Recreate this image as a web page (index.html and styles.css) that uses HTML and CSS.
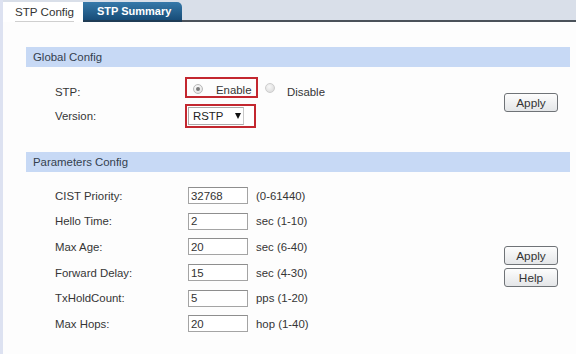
FILE: index.html
```html
<!DOCTYPE html>
<html lang="en">
<head>
    <meta charset="UTF-8">
    <meta name="viewport" content="width=device-width, initial-scale=1.0">
    <title>STP Config</title>
    <link rel="stylesheet" href="styles.css">
</head>
<body>
    <div class="tabs">
        <div class="tab tab-active"><span>STP Config</span></div>
        <div class="tab tab-summary">STP Summary</div>
        <div class="tab-fill"></div>
    </div>
    <div class="content">
        <div class="section">
            <div class="section-title">Global Config</div>
            <div class="section-body">
                <div class="rows">
                    <div class="row row-stp">
                        <span class="label">STP:</span>
                        <div class="mark mark-radio">
                            <span class="radio checked"></span>
                            <span class="opt">Enable</span>
                        </div>
                        <span class="radio radio-off"></span>
                        <span class="opt opt-off">Disable</span>
                    </div>
                    <div class="row row-version">
                        <span class="label">Version:</span>
                        <div class="mark mark-select">
                            <div class="select">RSTP<span class="arrow"></span></div>
                        </div>
                    </div>
                </div>
                <div class="buttons buttons-global">
                    <button type="button">Apply</button>
                </div>
            </div>
        </div>
        <div class="section">
            <div class="section-title">Parameters Config</div>
            <div class="section-body">
                <div class="rows params">
                    <div class="param">
                        <span class="label">CIST Priority:</span>
                        <input type="text" value="32768">
                        <span class="unit">(0-61440)</span>
                    </div>
                    <div class="param">
                        <span class="label">Hello Time:</span>
                        <input type="text" value="2">
                        <span class="unit">sec (1-10)</span>
                    </div>
                    <div class="param">
                        <span class="label">Max Age:</span>
                        <input type="text" value="20">
                        <span class="unit">sec (6-40)</span>
                    </div>
                    <div class="param">
                        <span class="label">Forward Delay:</span>
                        <input type="text" value="15">
                        <span class="unit">sec (4-30)</span>
                    </div>
                    <div class="param">
                        <span class="label">TxHoldCount:</span>
                        <input type="text" value="5">
                        <span class="unit">pps (1-20)</span>
                    </div>
                    <div class="param">
                        <span class="label">Max Hops:</span>
                        <input type="text" value="20">
                        <span class="unit">hop (1-40)</span>
                    </div>
                </div>
                <div class="buttons buttons-params">
                    <button type="button">Apply</button>
                    <button type="button">Help</button>
                </div>
            </div>
        </div>
    </div>
</body>
</html>
```

FILE: styles.css
```css
body {
    margin: 0;
    height: 354px;
    box-sizing: border-box;
    border-left: 3px solid #dde2f1;
    background-color: #fdfdfd;
    font-family: 'Liberation Sans', Arial, sans-serif;
    font-size: 11.4px;
    color: #353535;
    overflow: hidden;
}
.tabs {
    display: flex;
    align-items: flex-end;
    height: 22px;
    padding-top: 2px;
    box-sizing: border-box;
    background-color: #d9dfe9;
}
.tab {
    box-sizing: border-box;
}
.tab-active {
    width: 80px;
    height: 20px;
    padding: 3px 0 0 12px;
    background-color: #fff;
}
.tab-active span {
    display: inline-block;
    line-height: 14px;
    padding-bottom: 2px;
    border-bottom: 1px solid #cfcfcf;
    font-size: 11.6px;
    color: #333;
}
.tab-summary {
    width: 99px;
    height: 20px;
    padding-left: 14px;
    line-height: 18px;
    color: #fff;
    font-weight: bold;
    font-size: 11px;
    background: linear-gradient(#3679aa, #184d78);
    border-bottom: 2px solid #1f3c55;
    border-top-right-radius: 5px;
}
.tab-fill {
    flex: 1;
    height: 20px;
    box-sizing: border-box;
    border-bottom: 2px solid #4b525a;
}
.content {
    padding: 25px 6px 0 23px;
}
.section + .section {
    margin-top: 24px;
}
.section-title {
    height: 20px;
    line-height: 20px;
    padding-left: 7px;
    background-color: #c7d9f5;
    color: #34404e;
}
.section-body {
    display: flex;
    padding: 10px 12px 0 29px;
}
.rows {
    flex: 1;
}
.row {
    display: flex;
}
.row-stp {
    height: 21px;
    align-items: flex-end;
}
.row-stp .label,
.row-stp .opt-off {
    margin-bottom: -1px;
}
.row-version {
    height: 24px;
    margin-top: 6px;
    align-items: center;
}
.label {
    width: 130px;
    line-height: 14px;
}
.mark {
    box-sizing: border-box;
    border: 2px solid #c3272f;
    display: flex;
}
.mark-radio {
    width: 73px;
    height: 21px;
    padding-left: 6px;
    align-items: flex-end;
}
.radio {
    width: 10px;
    height: 10px;
    box-sizing: border-box;
    border-radius: 50%;
    border: 1px solid #b9b9b9;
    background: radial-gradient(circle at 40% 35%, #fff, #dcdcdc);
    position: relative;
    align-self: center;
    flex-shrink: 0;
}
.radio.checked::after {
    content: "";
    position: absolute;
    left: 2px;
    top: 2px;
    width: 4px;
    height: 4px;
    border-radius: 50%;
    background-color: #7a7a7a;
}
.mark-radio .radio {
    margin-top: 2px;
}
.radio-off {
    margin-left: 7px;
    border-color: #cdcdcd;
    background: radial-gradient(circle at 40% 35%, #f8f8f8, #d6d6d6);
}
.opt {
    margin-left: 13px;
    line-height: 14px;
}
.mark-radio .opt {
    margin-bottom: -1px;
}
.opt-off {
    margin-left: 12px;
}
.mark-select {
    width: 71px;
    height: 24px;
    padding: 1px;
    background-color: #fff;
}
.select {
    width: 56px;
    height: 18px;
    box-sizing: border-box;
    border: 1px solid #ababab;
    border-right-color: #c8c8c8;
    padding-left: 4px;
    line-height: 16px;
    display: flex;
    align-items: center;
    color: #222;
}
.arrow {
    margin-left: 12px;
    width: 0;
    height: 0;
    border-left: 3px solid transparent;
    border-right: 3px solid transparent;
    border-top: 6px solid #111;
}
.buttons {
    display: flex;
    flex-direction: column;
    gap: 3px;
}
.buttons-global {
    margin-top: 16px;
}
.buttons-params {
    margin-top: 64px;
}
.buttons button {
    width: 54px;
    height: 19px;
    padding: 0;
    border: 1px solid #6f7377;
    border-radius: 3px;
    background: linear-gradient(#fdfdfd, #e4e6e8);
    font-family: 'Liberation Sans', Arial, sans-serif;
    font-size: 11.8px;
    color: #333;
}
.params {
    padding-top: 1px;
}
.param {
    display: flex;
    align-items: center;
    height: 25.6px;
}
.param .label {
    width: 133px;
}
.param input {
    width: 60px;
    height: 17px;
    box-sizing: border-box;
    margin: 0;
    padding: 0 2px;
    border: 1px solid #a4a4a4;
    border-top-color: #8e8e8e;
    font-family: 'Liberation Sans', Arial, sans-serif;
    font-size: 11.4px;
    color: #333;
    background-color: #fff;
}
.unit {
    margin-left: 8px;
}
```
